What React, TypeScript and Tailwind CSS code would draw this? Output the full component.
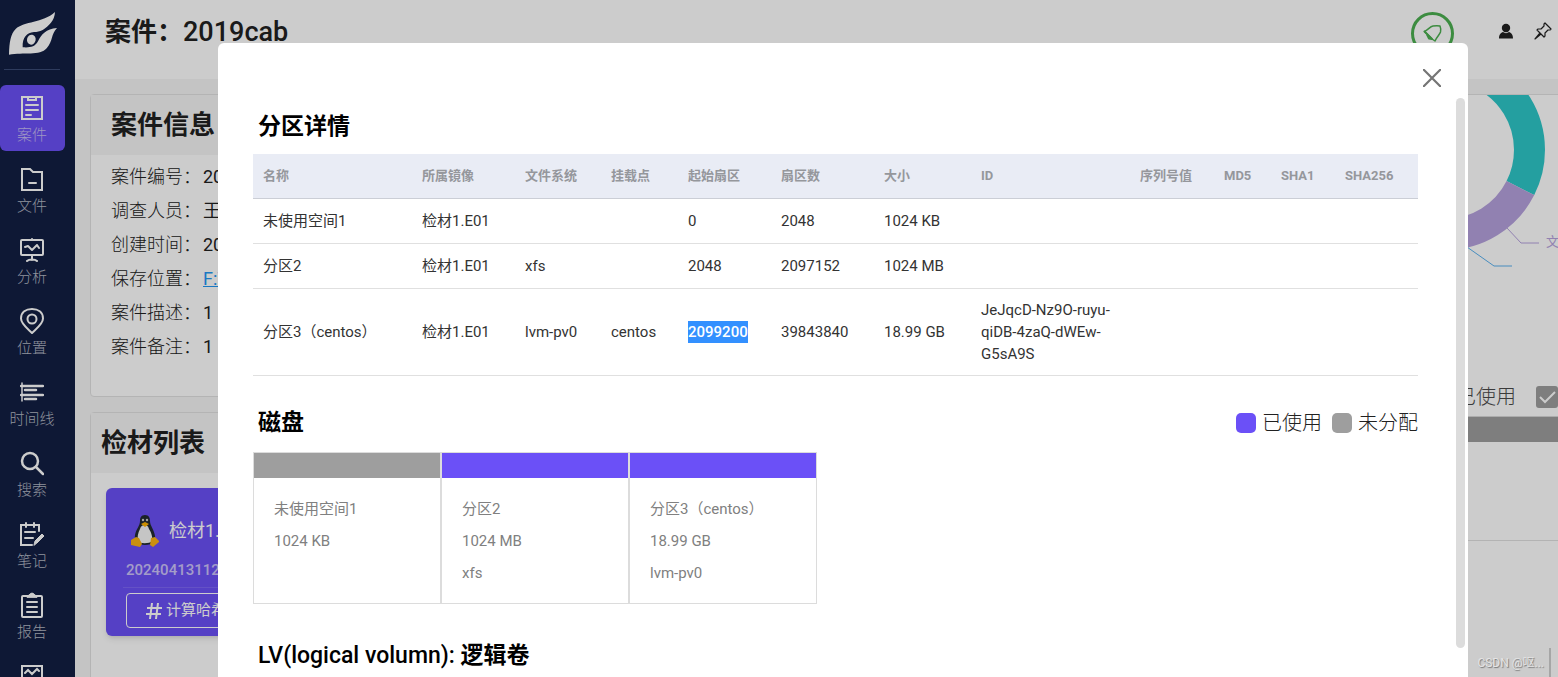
import React from 'react';

type IconProps = { className?: string };

const stroke = {
  fill: 'none',
  stroke: 'currentColor',
  strokeWidth: 2,
  strokeLinejoin: 'round' as const,
  strokeLinecap: 'round' as const,
};

const Logo: React.FC = () => (
  <svg viewBox="24 33 150 135" className="w-[50px] h-[45px]" fill="#fff" aria-hidden="true">
    <path d="M27 164C28 126 32 102 47 87C72 63 128 70 165 36C164 62 146 78 128 90C118 95 112 96 102 96C80 98 67 112 68 142C90 143 104 142 114 124C124 104 138 86 171 84C152 104 160 122 140 145C120 168 70 157 27 164Z" />
    <ellipse cx="94" cy="119" rx="13" ry="15" transform="rotate(12 94 119)" />
  </svg>
);

const CaseIcon: React.FC<IconProps> = ({ className }) => (
  <svg viewBox="0 0 24 26" className={className} {...stroke} strokeLinejoin="miter">
    <path d="M2 2h20v22H2z" />
    <path d="M8 2v3h8V2M6 10h12M6 15h12M6 20h5" />
  </svg>
);

const FolderIcon: React.FC<IconProps> = ({ className }) => (
  <svg viewBox="0 0 24 26" className={className} {...stroke} strokeLinejoin="miter">
    <path d="M2 3h8l3 3h9v18H2zM9 17h7" />
  </svg>
);

const AnalysisIcon: React.FC<IconProps> = ({ className }) => (
  <svg viewBox="0 0 24 26" className={className} {...stroke}>
    <rect x="1" y="3" width="22" height="15" rx="1" />
    <path d="M12 2v1M5 10l3-1 4 4 5-5 2 3M12 18v5M7 24c2-2 8-2 10 0" />
  </svg>
);

const PlaceIcon: React.FC<IconProps> = ({ className }) => (
  <svg viewBox="0 0 24 26" className={className} {...stroke}>
    <path d="M12 25C8 21 1 16 1 10.500C1 4 6 1 12 1s11 3 11 9.500C23 16 16 21 12 25z" />
    <circle cx="12" cy="11" r="4.500" />
  </svg>
);

const TimelineIcon: React.FC<IconProps> = ({ className }) => (
  <svg viewBox="0 0 24 26" className={className} {...stroke}>
    <path d="M2 4v18" strokeWidth="1.500" />
    <path d="M1 7h22M5 11h11M1 16h22M5 20h11" strokeWidth="2.500" />
  </svg>
);

const SearchIcon: React.FC<IconProps> = ({ className }) => (
  <svg viewBox="0 0 24 26" className={className} {...stroke} strokeWidth="2.500">
    <circle cx="10" cy="11" r="8" />
    <path d="M16 17l7 7" />
  </svg>
);

const NoteIcon: React.FC<IconProps> = ({ className }) => (
  <svg viewBox="0 0 24 26" className={className} {...stroke} strokeLinejoin="miter">
    <path d="M19 10V4H1v20h11M6 2v4M14 2v4M5 11h10M5 17h8" />
    <path d="M14 24l1-4 7-7 2 2-7 7z" fill="currentColor" strokeWidth="1" />
  </svg>
);

const ReportIcon: React.FC<IconProps> = ({ className }) => (
  <svg viewBox="0 0 24 26" className={className} {...stroke}>
    <rect x="2" y="4" width="20" height="21" rx="1" />
    <path d="M7 10h10M7 15h10M7 20h10" />
    <path d="M7 5c0-2 2-1 3-3q2-2 4 0c1 2 3 1 3 3z" fill="currentColor" strokeWidth="1" />
  </svg>
);

const ChartIcon: React.FC<IconProps> = ({ className }) => (
  <svg viewBox="0 0 24 26" className={className} {...stroke} strokeLinejoin="miter">
    <path d="M2 3h20v20H2zM5 10l3-3 4 4 5-5 2 2" />
  </svg>
);

const Tux: React.FC = () => (
  <svg viewBox="0 0 28 32" className="w-7 h-8" aria-hidden="true">
    <path d="M14 0c-4 0-5 3-5 6 0 5-4 8-5 14-1 5 2 10 10 10s11-4 10-9c-1-7-5-10-5-15 0-3-1-6-5-6z" fill="#222b33" />
    <path d="M14 10c-3 0-4 1-5 4-2 4-3 8-2 12 1 3 12 3 14 0 1-4-1-9-3-12-1-3-2-4-4-4z" fill="#f7f7f7" />
    <circle cx="12" cy="5" r="1.200" fill="#ccc" />
    <circle cx="16" cy="5" r="1.200" fill="#ccc" />
    <path d="M10 9l4-2 4 2-4 3z" fill="#ffb300" />
    <path d="M0 25l5-3 3 1 3 6-2 3-9-2zM28 26l-4-4-4 1-1 7 3 2 6-5z" fill="#fdb515" />
  </svg>
);

const navItems = [
  { label: '案件', Icon: CaseIcon, active: true },
  { label: '文件', Icon: FolderIcon },
  { label: '分析', Icon: AnalysisIcon },
  { label: '位置', Icon: PlaceIcon },
  { label: '时间线', Icon: TimelineIcon },
  { label: '搜索', Icon: SearchIcon },
  { label: '笔记', Icon: NoteIcon },
  { label: '报告', Icon: ReportIcon },
];

const caseInfo = [
  { label: '案件编号：', value: '20' },
  { label: '调查人员：', value: '王' },
  { label: '创建时间：', value: '20' },
  { label: '保存位置：', value: 'F:\\', link: true },
  { label: '案件描述：', value: '1' },
  { label: '案件备注：', value: '1' },
];

const columns = [
  { title: '名称', width: 'w-[159px]' },
  { title: '所属镜像', width: 'w-[103px]' },
  { title: '文件系统', width: 'w-[86px]' },
  { title: '挂载点', width: 'w-[77px]' },
  { title: '起始扇区', width: 'w-[93px]' },
  { title: '扇区数', width: 'w-[103px]' },
  { title: '大小', width: 'w-[97px]' },
  { title: 'ID', width: 'w-[159px]' },
  { title: '序列号值', width: 'w-[84px]' },
  { title: 'MD5', width: 'w-[57px]' },
  { title: 'SHA1', width: 'w-[64px]' },
  { title: 'SHA256', width: 'w-[83px]' },
];

const partitions = [
  ['未使用空间1', '检材1.E01', '', '', '0', '2048', '1024 KB', '', '', '', '', ''],
  ['分区2', '检材1.E01', 'xfs', '', '2048', '2097152', '1024 MB', '', '', '', '', ''],
  ['分区3（centos）', '检材1.E01', 'lvm-pv0', 'centos', '2099200', '39843840', '18.99 GB', 'JeJqcD-Nz9O-ruyu-qiDB-4zaQ-dWEw-G5sA9S', '', '', '', ''],
];

const selected = '2099200';

const disks = [
  { used: false, lines: ['未使用空间1', '1024 KB'] },
  { used: true, lines: ['分区2', '1024 MB', 'xfs'] },
  { used: true, lines: ['分区3（centos）', '18.99 GB', 'lvm-pv0'] },
];

const navLink = 'h-[66px] shrink-0 pt-[10px] pr-px flex flex-col items-center gap-1 text-white';

const Sidebar: React.FC = () => (
  <aside className="w-[75px] shrink-0 bg-[#121f43] overflow-hidden">
    <div className="w-[65px] h-[70px] pt-[11px] flex justify-center">
      <Logo />
    </div>
    <div className="w-14 h-px ml-1 -mt-px bg-[#3a4a75]" />
    <nav className="w-[65px] pt-[15px] flex flex-col gap-[5px]">
      {navItems.map(({ label, Icon, active }) => (
        <a key={label} href="#" className={active ? `${navLink} bg-[#6b50f7] rounded-md` : navLink}>
          <Icon className="w-6 h-[26px]" />
          <span className={`text-[15px] leading-5 font-light ${active ? 'text-[#c6bdf5]' : 'text-[#b4b8c4]'}`}>{label}</span>
        </a>
      ))}
      <a href="#" aria-label="图表" className={navLink}>
        <ChartIcon className="w-6 h-[26px]" />
      </a>
    </nav>
  </aside>
);

const Header: React.FC = () => (
  <header className="h-[79px] shrink-0 bg-white flex items-start justify-between pl-[30px] pr-[6px]">
    <h1 className="pt-3 text-[27px] leading-10 font-medium">
      <span className="text-[26px] font-bold">案件：</span>2019cab
    </h1>
    <div className="flex items-start">
      <button aria-label="通知" className="mt-3 size-[43px] rounded-full border-[3px] border-[#4caf50] text-[#4caf50] flex items-center justify-center">
        <svg viewBox="0 0 20 20" className="size-5" {...stroke} strokeWidth="1.500">
          <path d="M1.500 7.500C5 6 7 2.500 10 2c3-.5 5-.5 7 0 .8 2 1 4 .5 6-1 3-4 5-5.500 9L9 15z" />
          <path d="M1.500 7.500L9 15M4 10.500L6 14.500l3 .5" strokeWidth="2" />
        </svg>
      </button>
      <button aria-label="用户" className="mt-[23px] ml-11">
        <svg viewBox="0 0 16 16" className="size-4" fill="currentColor">
          <circle cx="8" cy="5" r="4.200" />
          <path d="M1 15.500c0-4 2-6 4-6.500 2 1.500 4 1.500 6 0 2 .5 4 2.500 4 6.500z" />
        </svg>
      </button>
      <button aria-label="固定" className="mt-[22px] ml-5">
        <svg viewBox="0 0 18 18" className="size-[18px]" {...stroke} strokeWidth="1.200">
          <path d="M11 1l6 6-1 1-2 0-3 3 0 3-1 1L3 8l1-1 3 0 3-3 0-2zM6 11l-5 6 6-5" />
        </svg>
      </button>
    </div>
  </header>
);

const CaseColumn: React.FC = () => (
  <div className="w-[400px] shrink-0 flex flex-col gap-[15px]">
    <section className="bg-white border border-[#e2e2e2] rounded">
      <h2 className="h-[60px] pl-5 flex items-center bg-[#f6f6f6] text-[26px] font-bold">案件信息</h2>
      <dl className="pt-[5px] pb-8 pl-5 text-[18px] leading-[34px]">
        {caseInfo.map((row) => (
          <div key={row.label} className="flex">
            <dt className="w-[92px] whitespace-nowrap font-light">{row.label}</dt>
            <dd>
              {row.link ? <a href="#" className="text-[#2196f3] underline">{row.value}</a> : row.value}
            </dd>
          </div>
        ))}
      </dl>
    </section>

    <section className="bg-white border border-[#e2e2e2] rounded pb-20">
      <h2 className="h-[60px] pl-[10px] flex items-center bg-[#f6f6f6] text-[26px] font-bold">检材列表</h2>
      <div className="mt-[15px] mx-[15px] h-[148px] rounded-md bg-[#6b50f7] shadow-md px-5 pt-[27px] text-white">
        <div className="flex items-center gap-[10px] pl-[5px]">
          <Tux />
          <span className="text-[18px] leading-8">检材1.E01</span>
        </div>
        <p className="mt-[11px] text-[15px] leading-6 font-medium text-[#cdc4fb]">20240413112</p>
        <div className="mt-[5px] -ml-[3px] h-px bg-[#7d66f8]" />
        <button className="mt-[5px] w-full h-[35px] pl-[19px] flex items-center gap-1 rounded border border-white text-[15px]">
          <svg viewBox="0 0 16 16" className="size-4" {...stroke} strokeLinecap="butt">
            <path d="M6 0L4 16M12 0l-2 16M1 5h15M0 11h15" />
          </svg>
          计算哈希
        </button>
      </div>
    </section>
  </div>
);

const UsageColumn: React.FC = () => (
  <section className="flex-1 min-w-0 bg-white border-l border-t border-[#e2e2e2] rounded-tl flex flex-col">
    <svg viewBox="0 0 200 285" className="w-[200px] h-[285px] ml-auto shrink-0" fill="none">
      <path d="M87-29.500A84.500 84.500 0 0 1 162.400 93.100" stroke="#2ec7c9" strokeWidth="31" />
      <path d="M162.400 93.100A84.500 84.500 0 0 1 87 139.500" stroke="#b6a2de" strokeWidth="31" />
      <path d="M149 133l14 15h18" stroke="#b6a2de" />
      <path d="M109 152l27 19h18" stroke="#5ab1ef" />
      <text x="188" y="151" fill="#b6a2de" fontSize="13">文</text>
    </svg>
    <div className="h-9 pb-0.5 shrink-0 flex justify-end items-center">
      <label className="flex items-center gap-5 text-[20px] font-light text-[#4a4a4a]">
        已使用
        <span className="relative flex size-[22px]">
          <input type="checkbox" defaultChecked className="appearance-none size-[22px] rounded-[3px] bg-[#9e9e9e]" />
          <svg viewBox="0 0 22 22" className="absolute inset-0 size-[22px] pointer-events-none" fill="none" stroke="#fff" strokeWidth="2">
            <path d="M4 11l5 5L19 6" />
          </svg>
        </span>
      </label>
    </div>
    <div className="h-[26px] shrink-0 bg-[#9e9e9e] border-t border-[#d8d8d8]" />
    <div className="h-[98px] shrink-0" />
    <div className="flex-1 border-t border-[#e0e0e0] flex justify-end items-end pr-[7px]">
      <div className="w-[2px] h-[29px] bg-[#d0d0d0]" />
    </div>
  </section>
);

const PartitionTable: React.FC = () => (
  <table className="w-full table-fixed text-left text-[15px] leading-[22px]">
    <thead>
      <tr className="h-11 bg-[#e9ecf5] border-b border-[#cbced6]">
        {columns.map((col) => (
          <th key={col.title} className={`px-[10px] text-[13px] font-bold text-[#95979c] whitespace-nowrap ${col.width}`}>
            {col.title}
          </th>
        ))}
      </tr>
    </thead>
    <tbody>
      {partitions.map((row) => (
        <tr key={row[0]} className="h-[45px] border-b border-[#e0e0e0]">
          {row.map((cell, i) => (
            <td key={columns[i].title} className="px-[10px] py-[10px] text-[#333]">
              {cell === selected ? <span className="bg-[#3390ff] text-white font-medium inline-block">{cell}</span> : cell}
            </td>
          ))}
        </tr>
      ))}
    </tbody>
  </table>
);

const PartitionDialog: React.FC = () => (
  <div role="dialog" aria-modal="true" aria-label="分区详情" className="flex-1 min-w-0 bg-white rounded-t-md flex flex-col text-black">
    <div className="h-[55px] shrink-0 flex justify-end items-start pt-[26px] pr-[27px]">
      <button aria-label="关闭">
        <svg viewBox="0 0 18 18" className="size-[18px]" stroke="#757575" strokeWidth="2.200">
          <path d="M0 0l18 18M18 0L0 18" />
        </svg>
      </button>
    </div>
    <div className="flex-1 min-h-0 flex pl-[35px] pr-[3px]">
      <div className="flex-1 min-w-0 overflow-hidden">
        <h2 className="h-14 pt-[11px] pl-[5px] text-[23px] leading-9 font-bold">分区详情</h2>
        <PartitionTable />

        <div className="h-[76px] pl-[5px] pt-[18px] flex justify-between items-center">
          <h2 className="text-[23px] leading-9 font-bold">磁盘</h2>
          <ul className="flex gap-[10px] text-[20px] leading-8 font-light text-[#212121]">
            <li className="flex items-center gap-[6px]">
              <span className="size-5 rounded-[5px] bg-[#6b50f7]" />已使用
            </li>
            <li className="flex items-center gap-[6px]">
              <span className="size-5 rounded-[5px] bg-[#9e9e9e]" />未分配
            </li>
          </ul>
        </div>

        <div className="flex">
          {disks.map((disk) => (
            <div key={disk.lines[0]} className="w-[188px] h-[152px] border border-[#dcdcdc]">
              <div className={`h-[25px] ${disk.used ? 'bg-[#6b50f7]' : 'bg-[#9e9e9e]'}`} />
              <div className="pt-[15px] pl-5 text-[15px] leading-8 text-[#808080]">
                {disk.lines.map((line) => (
                  <p key={line}>{line}</p>
                ))}
              </div>
            </div>
          ))}
        </div>

        <h2 className="pt-[34px] pl-[5px] text-[23px] leading-9 font-medium">
          LV(logical volumn): <span className="font-bold">逻辑卷</span>
        </h2>
      </div>
      <div className="w-[9px] shrink-0 ml-[38px] mb-[29px] rounded-full bg-[#dcdcdc]" />
    </div>
  </div>
);

const App: React.FC = () => {
  return (
    <div className="relative h-screen overflow-hidden flex text-[#212121] font-[Roboto,'Noto_Sans_CJK_SC',sans-serif]">
      <Sidebar />
      <div className="flex-1 min-w-0 flex flex-col bg-[#f6f6f6]">
        <Header />
        <main className="flex-1 min-h-0 flex gap-[15px] pt-[15px] pl-[15px]">
          <CaseColumn />
          <UsageColumn />
        </main>
      </div>

      <div className="absolute inset-0 bg-black/20 flex pt-[43px] pl-[218px] pr-[90px]">
        <PartitionDialog />
      </div>

      <p className="absolute right-[14px] bottom-[6px] text-[12px] leading-4 text-[#e4e4e4] [text-shadow:1px_1px_1px_#777]">
        CSDN @呕...
      </p>
    </div>
  );
};

export default App;
